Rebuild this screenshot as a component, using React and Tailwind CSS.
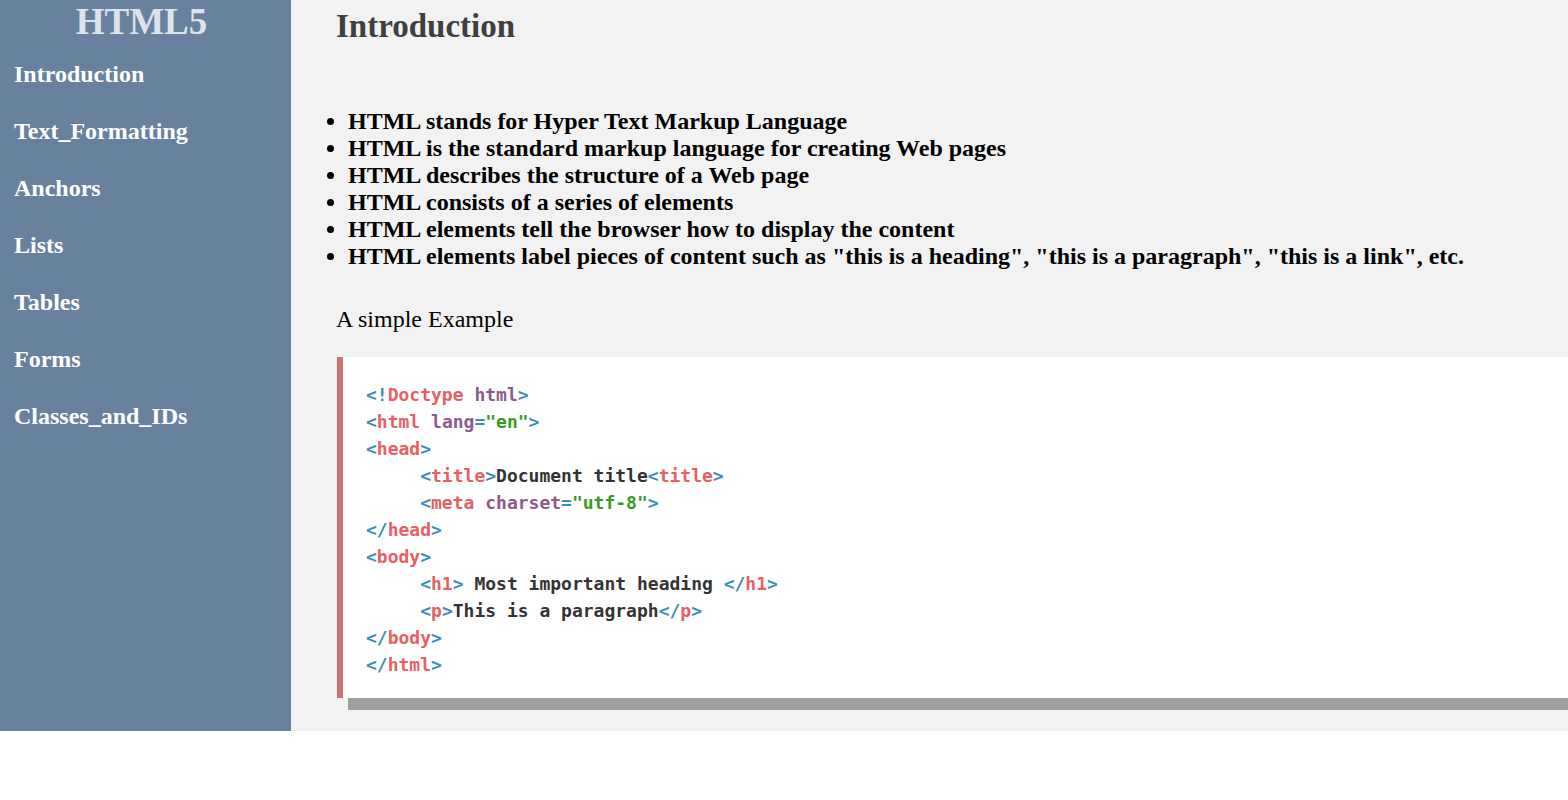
import React from "react";

const serif = "font-['Liberation_Serif','Times_New_Roman',serif]";

const nav = ["Introduction", "Text_Formatting", "Anchors", "Lists", "Tables", "Forms", "Classes_and_IDs"];

const points = [
  "HTML stands for Hyper Text Markup Language",
  "HTML is the standard markup language for creating Web pages",
  "HTML describes the structure of a Web page",
  "HTML consists of a series of elements",
  "HTML elements tell the browser how to display the content",
  'HTML elements label pieces of content such as "this is a heading", "this is a paragraph", "this is a link", etc.',
];

// little helpers for the highlighted code
const B = ({ children }) => <span className="text-[#3b8db5]">{children}</span>;
const T = ({ children }) => <span className="text-[#e8605f]">{children}</span>;
const A = ({ children }) => <span className="text-[#8d5a8d]">{children}</span>;
const S = ({ children }) => <span className="text-[#3a9a25]">{children}</span>;

function CodeBlock() {
  const ind = "     ";
  return (
    <pre className="font-['DejaVu_Sans_Mono','Liberation_Mono',monospace] font-bold text-[18px] leading-[27px] text-[#333]">
      <B>&lt;!</B><T>Doctype</T> <A>html</A><B>&gt;</B>{"\n"}
      <B>&lt;</B><T>html</T> <A>lang</A><B>=</B><S>"en"</S><B>&gt;</B>{"\n"}
      <B>&lt;</B><T>head</T><B>&gt;</B>{"\n"}
      {ind}<B>&lt;</B><T>title</T><B>&gt;</B>Document title<B>&lt;</B><T>title</T><B>&gt;</B>{"\n"}
      {ind}<B>&lt;</B><T>meta</T> <A>charset</A><B>=</B><S>"utf-8"</S><B>&gt;</B>{"\n"}
      <B>&lt;/</B><T>head</T><B>&gt;</B>{"\n"}
      <B>&lt;</B><T>body</T><B>&gt;</B>{"\n"}
      {ind}<B>&lt;</B><T>h1</T><B>&gt;</B> Most important heading <B>&lt;/</B><T>h1</T><B>&gt;</B>{"\n"}
      {ind}<B>&lt;</B><T>p</T><B>&gt;</B>This is a paragraph<B>&lt;/</B><T>p</T><B>&gt;</B>{"\n"}
      <B>&lt;/</B><T>body</T><B>&gt;</B>{"\n"}
      <B>&lt;/</B><T>html</T><B>&gt;</B>
    </pre>
  );
}

export default function App() {
  return (
    <div className={`${serif} bg-white min-h-[800px]`}>
      <div className="flex h-[731px]">
        <aside className="w-[291px] shrink-0 bg-[#67819f]">
          <h1 className="text-center pr-[8px] text-[37px] leading-[43px] font-bold text-[#dde3ea]">HTML5</h1>
          <nav className="flex flex-col gap-[29px] px-[14px] pt-[17px]">
            {nav.map(n => (
              <a key={n} className="text-[24px] leading-[28px] font-bold text-white">{n}</a>
            ))}
          </nav>
        </aside>

        <main className="flex-1 min-w-0 bg-[#f2f2f2] overflow-hidden">
          <h2 className="pl-[45px] pt-[8px] text-[33px] leading-[37px] font-bold text-[#3f3f3f]">Introduction</h2>
          <ul className="list-disc pl-[57px] mt-[63px] text-[24px] leading-[27px] font-bold text-black">
            {points.map(p => (
              <li key={p} className="whitespace-nowrap">{p}</li>
            ))}
          </ul>
          <p className="pl-[45px] mt-[36px] text-[24px] leading-[27px] text-black">A simple Example</p>
          <div className="ml-[46px] mt-[24px]">
            <div className="bg-white border-l-[6px] border-[#cd7373] pl-[23px] pt-[24px] pb-[20px]">
              <CodeBlock />
            </div>
            <div className="ml-[11px] h-[12px] bg-[#a39e9e]" />
          </div>
        </main>
      </div>
    </div>
  );
}
